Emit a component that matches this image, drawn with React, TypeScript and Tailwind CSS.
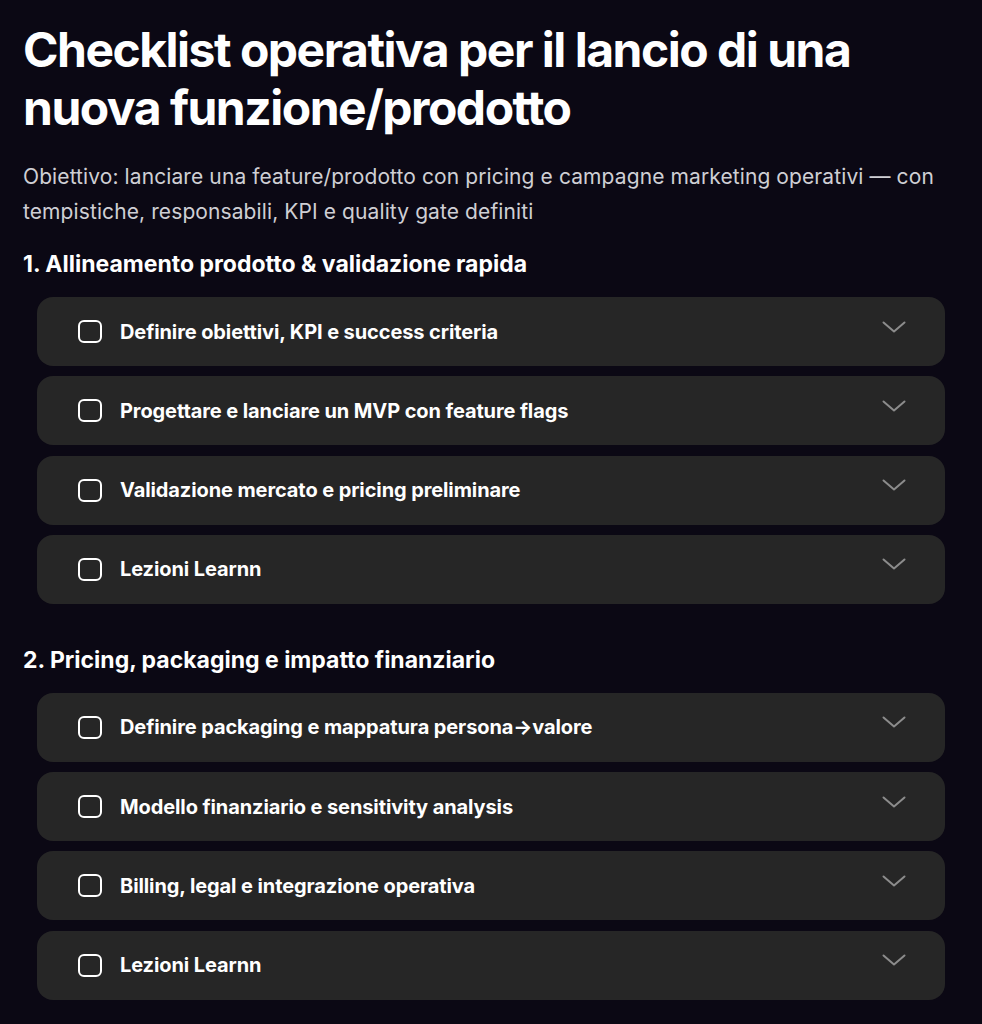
type Section = {
  title: string;
  items: string[];
};

const sections: Section[] = [
  {
    title: "1. Allineamento prodotto & validazione rapida",
    items: [
      "Definire obiettivi, KPI e success criteria",
      "Progettare e lanciare un MVP con feature flags",
      "Validazione mercato e pricing preliminare",
      "Lezioni Learnn",
    ],
  },
  {
    title: "2. Pricing, packaging e impatto finanziario",
    items: [
      "Definire packaging e mappatura persona→valore",
      "Modello finanziario e sensitivity analysis",
      "Billing, legal e integrazione operativa",
      "Lezioni Learnn",
    ],
  },
];

function Chevron() {
  return (
    <svg width="24" height="12" viewBox="0 0 24 12" fill="none" className="-mt-[10px] shrink-0">
      <polyline points="1.5,1.5 12,10.5 22.5,1.5" stroke="#8c8c8c" strokeWidth="2" strokeLinecap="round" strokeLinejoin="round" />
    </svg>
  );
}

function ChecklistItem({ label }: { label: string }) {
  return (
    <div className="flex h-[69px] items-center rounded-2xl bg-[#262626] pr-[39px] pl-[41px]">
      <span className="h-[23px] w-[24px] shrink-0 rounded-[6px] border-2 border-white"></span>
      <span className="ml-[18px] flex-1 text-[20px] font-bold tracking-[-0.1px] text-white">{label}</span>
      <Chevron />
    </div>
  );
}

export default function App() {
  return (
    <div className="min-h-screen bg-[#0b0814] px-[23px] pt-[21px] pb-6 font-['Inter',sans-serif] text-white">
      <h1 className="text-[48px] leading-[58px] font-bold tracking-[-1.5px]">
        Checklist operativa per il lancio di una nuova funzione/prodotto
      </h1>
      <p className="mt-[22px] text-[21px] leading-[35px] tracking-[0.1px] text-[#cfcfd4]">
        Obiettivo: lanciare una feature/prodotto con pricing e campagne marketing operativi — con
        tempistiche, responsabili, KPI e quality gate definiti
      </p>
      {sections.map((s, i) => (
        <div key={s.title} className={i === 0 ? "mt-[19px]" : "mt-[40px]"}>
          <h2 className="text-[23px] leading-[32px] font-bold">{s.title}</h2>
          <div className="mt-[17px] flex flex-col gap-[10.3px] px-[14px]">
            {s.items.map((it, j) => (
              <ChecklistItem key={j} label={it} />
            ))}
          </div>
        </div>
      ))}
    </div>
  );
}
